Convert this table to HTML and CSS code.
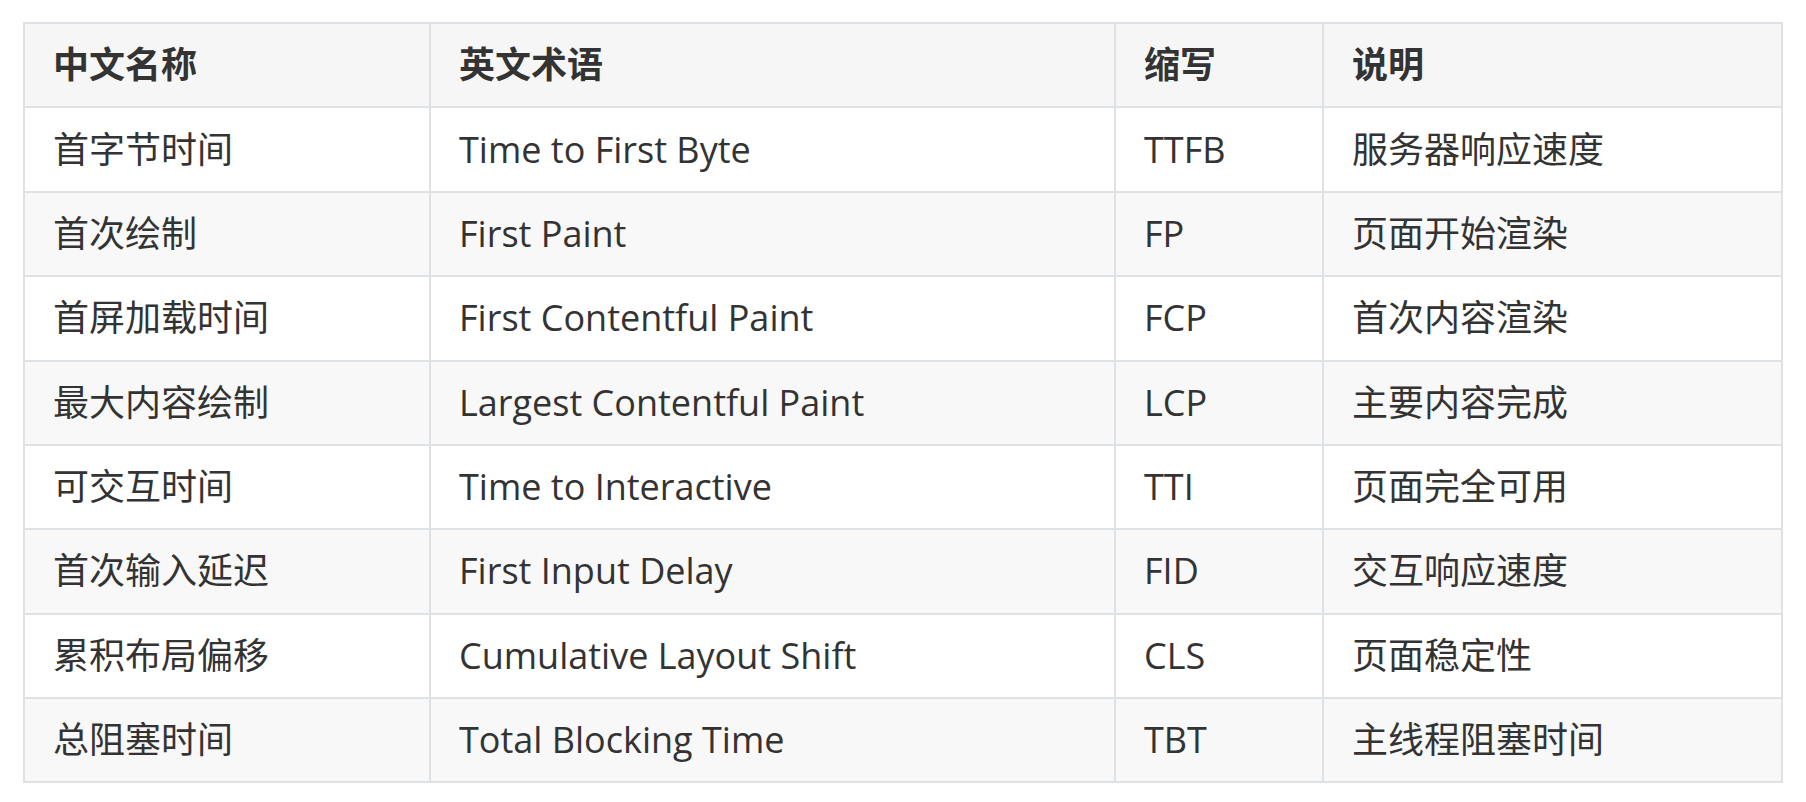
FILE: index.html
```html
<!DOCTYPE html>
<html lang="zh">
<head>
<meta charset="utf-8">
<link rel="stylesheet" href="styles.css">
</head>
<body>
<div class="page">
<table class="metrics">
  <colgroup>
    <col class="c1"><col class="c2"><col class="c3"><col class="c4">
  </colgroup>
  <thead>
    <tr><th>中文名称</th><th>英文术语</th><th>缩写</th><th>说明</th></tr>
  </thead>
  <tbody>
    <tr><td>首字节时间</td><td>Time to First Byte</td><td>TTFB</td><td>服务器响应速度</td></tr>
    <tr><td>首次绘制</td><td>First Paint</td><td>FP</td><td>页面开始渲染</td></tr>
    <tr><td>首屏加载时间</td><td>First Contentful Paint</td><td>FCP</td><td>首次内容渲染</td></tr>
    <tr><td>最大内容绘制</td><td>Largest Contentful Paint</td><td>LCP</td><td>主要内容完成</td></tr>
    <tr><td>可交互时间</td><td>Time to Interactive</td><td>TTI</td><td>页面完全可用</td></tr>
    <tr><td>首次输入延迟</td><td>First Input Delay</td><td>FID</td><td>交互响应速度</td></tr>
    <tr><td>累积布局偏移</td><td>Cumulative Layout Shift</td><td>CLS</td><td>页面稳定性</td></tr>
    <tr><td>总阻塞时间</td><td>Total Blocking Time</td><td>TBT</td><td>主线程阻塞时间</td></tr>
  </tbody>
</table>
</div>
</body>
</html>
```
FILE: styles.css
```css
html, body {
  margin: 0;
  padding: 0;
  background: #ffffff;
}
.page {
  padding: 22px 0 0 23px;
  font-family: "Open Sans", "Noto Sans CJK SC", sans-serif;
  color: #333333;
}
.metrics {
  border-collapse: collapse;
  table-layout: fixed;
  width: 1758px;
  font-size: 36px;
}
.c1 { width: 406px; }
.c2 { width: 685px; }
.c3 { width: 208px; }
.c4 { width: 459px; }
.metrics th,
.metrics td {
  border: 2px solid #dfe2e5;
  padding: 13.2px 28px;
  line-height: 56px;
  text-align: left;
  white-space: nowrap;
}
.metrics th {
  font-weight: 700;
  background: #f6f6f6;
}
.metrics tbody tr:nth-child(even) td {
  background: #f8f8f8;
}
```
